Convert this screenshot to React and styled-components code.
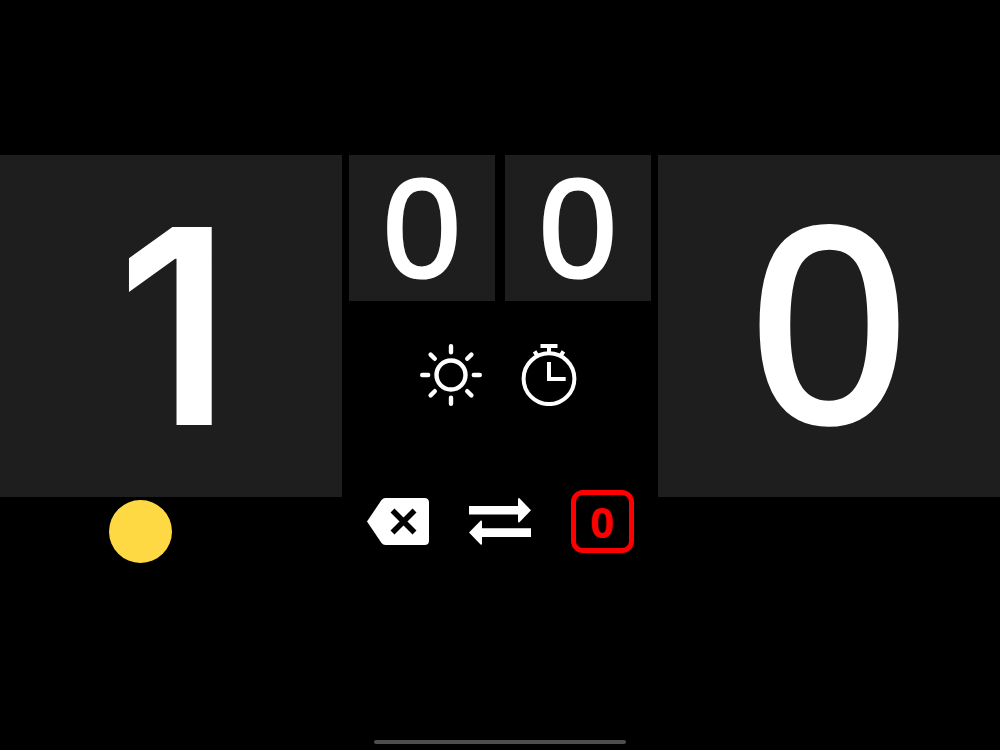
import React, { useState } from "react";
import styled, { createGlobalStyle } from "styled-components";

const GlobalStyle = createGlobalStyle`
  * { box-sizing: border-box; }
  body { margin: 0; background: #000; color: #fff; font-family: "Liberation Sans", sans-serif; }
`;

const Screen = styled.main`
  min-height: 100vh;
  display: flex;
  flex-direction: column;
  justify-content: space-between;
  align-items: center;
  padding: 155px 0 6px;
`;

const Board = styled.section`
  width: 100%;
  display: grid;
  grid-template-columns: 342fr 302fr 342fr;
  column-gap: 7px;
  align-items: start;
`;

const Side = styled.div`
  display: flex;
  flex-direction: column;
  gap: 3px;
`;

const Centre = styled.div`
  display: flex;
  flex-direction: column;
  align-items: center;
`;

const Sets = styled.div`
  width: 100%;
  display: grid;
  grid-template-columns: 1fr 1fr;
  gap: 10px;
`;

const Score = styled.button`
  width: 100%;
  aspect-ratio: 1;
  padding: ${(p) => (p.$digit === 1 ? "0 0 0 6px" : p.$large ? "0 0 2px" : "0")};
  border: 0;
  display: grid;
  place-items: center;
  background: #1e1e1e;
  color: #fff;
  font-family: ${(p) => (p.$digit === 1 ? '"Inter"' : '"Liberation Sans"')}, sans-serif;
  font-weight: ${(p) => (p.$digit === 1 ? 600 : 400)};
  font-size: ${(p) => (!p.$large ? "139px" : p.$digit === 1 ? "272px" : "278px")};
  line-height: 1;
  -webkit-text-stroke: ${(p) => (p.$digit === 1 ? "0" : p.$large ? "6px" : "3px")} #fff;
  cursor: pointer;
`;

const Tools = styled.div`
  display: flex;
  gap: ${(p) => p.$gap};
  margin-top: ${(p) => p.$top};
`;

const Tool = styled.button`
  width: 62px;
  height: 62px;
  padding: 0;
  border: 0;
  background: none;
  color: #fff;
  cursor: pointer;

  svg { display: block; width: 100%; height: 100%; }
`;

const Reset = styled(Tool)`
  width: 63px;
  height: 63px;
  display: grid;
  place-items: center;
  border: 5px solid #f00;
  border-radius: 12px;
  color: #f00;
  font: 700 42px/1 "Noto Sans", sans-serif;
`;

const Serve = styled.span`
  width: 63px;
  height: 63px;
  margin-left: 32%;
  border-radius: 50%;
  background: #ffd943;
`;

const HomeBar = styled.div`
  width: 252px;
  height: 4px;
  border-radius: 2px;
  background: #4d4d4d;
`;

const SunIcon = () => (
  <svg viewBox="0 0 62 62" fill="none" stroke="currentColor" strokeWidth="4.4" strokeLinecap="round" aria-hidden="true">
    <circle cx="31" cy="31" r="14.5" />
    <path d="M31 2.2v6M31 53.8v6M2.2 31h6M53.8 31h6M10.6 10.6l4.2 4.2M47.2 47.2l4.2 4.2M10.6 51.4l4.2-4.2M47.2 14.8l4.2-4.2" />
  </svg>
);

const TimerIcon = () => (
  <svg viewBox="0 0 62 62" fill="none" stroke="currentColor" aria-hidden="true">
    <circle cx="31" cy="34.7" r="25.4" strokeWidth="4" />
    <path d="M22.5 2h17M31 2v8" strokeWidth="4" />
    <path d="M31 18v17h16.7" strokeWidth="4" />
    <path d="M16.6 7.4l3 5M45.4 7.4l-3 5" strokeWidth="4" />
  </svg>
);

const BackspaceIcon = () => (
  <svg viewBox="0 0 62 62" aria-hidden="true">
    <path d="M0 31.5L14.5 10Q16 8 18.5 8H57.5Q62 8 62 12.5V50.5Q62 55 57.5 55H18.5Q16 55 14.5 53Z" fill="currentColor" />
    <path d="M25.5 20.5l22 22M47.5 20.5l-22 22" stroke="#000" strokeWidth="5.6" fill="none" />
  </svg>
);

const SwapIcon = () => (
  <svg viewBox="0 0 62 62" fill="currentColor" aria-hidden="true">
    <path d="M0 16h49V9q0-1 1.2-1L62 20.3 50.2 32.5Q49 32.5 49 31.5V24.5H0Z" />
    <path d="M62 38.2H13V31.5q0-1.3-1.2-1L0 42.5 11.8 54.7Q13 55 13 53.7V47H62Z" />
  </svg>
);

export default function App() {
  const initial = { left: 1, right: 0, setsLeft: 0, setsRight: 0 };
  const [score, setScore] = useState(initial);
  const add = (key) => setScore((s) => ({ ...s, [key]: s[key] + 1 }));
  const undo = () => setScore((s) => ({ ...s, left: Math.max(0, s.left - 1) }));
  const swap = () =>
    setScore((s) => ({ left: s.right, right: s.left, setsLeft: s.setsRight, setsRight: s.setsLeft }));
  const reset = () => setScore({ left: 0, right: 0, setsLeft: 0, setsRight: 0 });

  return (
    <>
      <GlobalStyle />
      <Screen>
        <Board>
          <Side>
            <Score $large $digit={score.left} onClick={() => add("left")}>{score.left}</Score>
            <Serve />
          </Side>
          <Centre>
            <Sets>
              <Score $digit={score.setsLeft} onClick={() => add("setsLeft")}>{score.setsLeft}</Score>
              <Score $digit={score.setsRight} onClick={() => add("setsRight")}>{score.setsRight}</Score>
            </Sets>
            <Tools $gap="36px" $top="43px">
              <Tool aria-label="Brightness"><SunIcon /></Tool>
              <Tool aria-label="Timer"><TimerIcon /></Tool>
            </Tools>
            <Tools $gap="40px" $top="84px">
              <Tool aria-label="Undo" onClick={undo}><BackspaceIcon /></Tool>
              <Tool aria-label="Swap sides" onClick={swap}><SwapIcon /></Tool>
              <Reset onClick={reset}>0</Reset>
            </Tools>
          </Centre>
          <Side>
            <Score $large $digit={score.right} onClick={() => add("right")}>{score.right}</Score>
          </Side>
        </Board>
        <HomeBar />
      </Screen>
    </>
  );
}
